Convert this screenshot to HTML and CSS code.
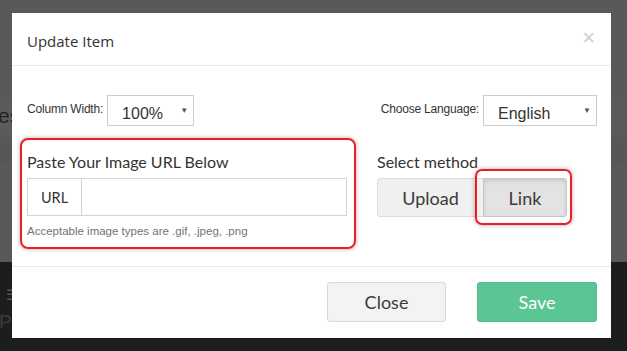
FILE: index.html
```html
<html>
<head>
<link rel="stylesheet" href="styles.css">
</head>
<body>
<div class="page">
    <div class="page-top">
        <div class="page-heading">es</div>
    </div>
    <div class="page-bar">
        <div class="bar-icon">&#9776;</div>
        <div class="bar-label">Pa</div>
    </div>
</div>

<div class="modal">
    <div class="modal-header">
        <div class="modal-title">Update Item</div>
        <div class="modal-close">&times;</div>
    </div>
    <div class="modal-body">
        <div class="settings-row">
            <div class="setting">
                <span class="setting-label">Column Width:</span>
                <div class="fake-select select-width">
                    <span>100%</span>
                    <span class="caret">&#9660;</span>
                </div>
            </div>
            <div class="setting">
                <span class="setting-label">Choose Language:</span>
                <div class="fake-select select-lang">
                    <span>English</span>
                    <span class="caret">&#9660;</span>
                </div>
            </div>
        </div>
        <div class="content-row">
            <div class="paste-box">
                <div class="field-label">Paste Your Image URL Below</div>
                <div class="input-group">
                    <span class="input-addon">URL</span>
                    <span class="input-field"></span>
                </div>
                <div class="help-text">Acceptable image types are .gif, .jpeg, .png</div>
            </div>
            <div class="method">
                <div class="field-label">Select method</div>
                <div class="btn-group">
                    <div class="btn btn-upload">Upload</div>
                    <div class="btn-mark">
                        <div class="btn btn-link">Link</div>
                    </div>
                </div>
            </div>
        </div>
    </div>
    <div class="modal-footer">
        <div class="btn btn-close">Close</div>
        <div class="btn btn-save">Save</div>
    </div>
</div>
</body>
</html>
```

FILE: styles.css
```css
html, body {
    margin: 0;
    height: 100%;
    overflow: hidden;
}

body {
    background: #1c1d1f;
    font-family: "Liberation Sans", Arial, sans-serif;
}

.page-top {
    height: 262px;
    background: #595959;
    background-image: linear-gradient(#595959 0, #595959 97px, #5b5b5b 97px, #5b5b5b 137px, #575757 137px, #575757 165px, #595959 165px);
    overflow: hidden;
}

.page-heading {
    padding-top: 104px;
    margin-left: -2px;
    font-size: 21px;
    color: #222;
}

.page-bar {
    height: 89px;
    overflow: hidden;
}

.bar-icon {
    padding-top: 25px;
    margin-left: 6px;
    font-size: 15px;
    line-height: 16px;
    color: #555;
}

.bar-label {
    margin-left: -1px;
    margin-top: 8px;
    font-size: 19px;
    color: #3c3c3c;
}

.modal {
    position: absolute;
    left: 12px;
    top: 13px;
    width: 599px;
    background: #fff;
}

.modal-header {
    display: flex;
    justify-content: space-between;
    align-items: center;
    padding: 18px 16px 14px 15px;
    border-bottom: 1px solid #e9e9e9;
}

.modal-title {
    font-family: "Open Sans", sans-serif;
    font-size: 15px;
    line-height: 20px;
    color: #333;
}

.modal-close {
    font-size: 22px;
    line-height: 20px;
    margin-top: -6px;
    color: #cdcdcd;
}

.modal-body {
    height: 201px;
    box-sizing: border-box;
    padding: 29px 14px 0 15px;
    border-bottom: 1px solid #e9e9e9;
}

.settings-row {
    display: flex;
    justify-content: space-between;
}

.setting {
    display: flex;
    align-items: center;
    gap: 4px;
}

.setting-label {
    font-size: 12px;
    color: #333;
    letter-spacing: -0.2px;
    padding-bottom: 4px;
}

.fake-select {
    box-sizing: border-box;
    height: 31px;
    border: 1px solid #ccc;
    display: flex;
    justify-content: space-between;
    align-items: center;
    padding: 7px 5px 0 14px;
    font-size: 16px;
    color: #333;
}

.select-width {
    width: 87px;
}

.select-lang {
    width: 114px;
}

.caret {
    font-size: 8px;
    color: #555;
    margin-top: -8px;
}

.content-row {
    display: flex;
    gap: 21px;
    margin-top: 12px;
    margin-left: -7px;
}

.paste-box {
    flex: none;
    width: 336px;
    height: 111px;
    box-sizing: border-box;
    border: 2px solid #ee1c24;
    border-radius: 8px;
    box-shadow: 0 0 4px rgba(0, 0, 0, 0.35);
    padding: 12px 7px 0 5px;
}

.field-label {
    font-family: Lato, sans-serif;
    font-size: 16px;
    line-height: 20px;
    color: #333;
}

.input-group {
    display: flex;
    height: 38px;
    margin-top: 6px;
    border: 1px solid #d3d3d8;
    box-sizing: border-box;
}

.input-addon {
    width: 53px;
    border-right: 1px solid #d3d3d8;
    display: flex;
    align-items: center;
    justify-content: center;
    font-family: Lato, sans-serif;
    font-size: 14.5px;
    color: #333;
}

.input-field {
    flex: 1;
}

.help-text {
    margin-top: 8px;
    font-size: 11.5px;
    line-height: 14px;
    color: #737373;
}

.method {
    padding-top: 14px;
}

.btn-group {
    display: flex;
    margin-top: 6px;
}

.btn {
    box-sizing: border-box;
    display: flex;
    align-items: center;
    justify-content: center;
    font-family: Lato, sans-serif;
    font-size: 18px;
    font-weight: 400;
    color: #3a3a3a;
    border-radius: 3px;
}

.btn-upload {
    width: 107px;
    height: 39px;
    background: #f0f0f0;
    border: 1px solid #dcdcdc;
    border-radius: 3px 0 0 3px;
}

.btn-mark {
    position: relative;
    margin-left: -1px;
}

.btn-mark::after {
    content: "";
    position: absolute;
    left: -8px;
    right: -5px;
    top: -9px;
    bottom: -8px;
    border: 2px solid #ee1c24;
    border-radius: 7px;
    box-shadow: 0 0 4px rgba(0, 0, 0, 0.35);
}

.btn-link {
    width: 84px;
    height: 39px;
    background: #e3e3e3;
    border: 1px solid #c6c6c6;
    border-radius: 0 3px 3px 0;
    box-shadow: inset 0 2px 4px rgba(0, 0, 0, 0.12);
}

.modal-footer {
    display: flex;
    justify-content: flex-end;
    gap: 31px;
    padding: 15px 14px 16px 0;
}

.btn-close {
    width: 119px;
    height: 40px;
    background: #f3f3f3;
    border: 1px solid #dadada;
}

.btn-save {
    width: 120px;
    height: 40px;
    background: #5bc594;
    border: 1px solid #55bc8c;
    color: #fff;
}
```
